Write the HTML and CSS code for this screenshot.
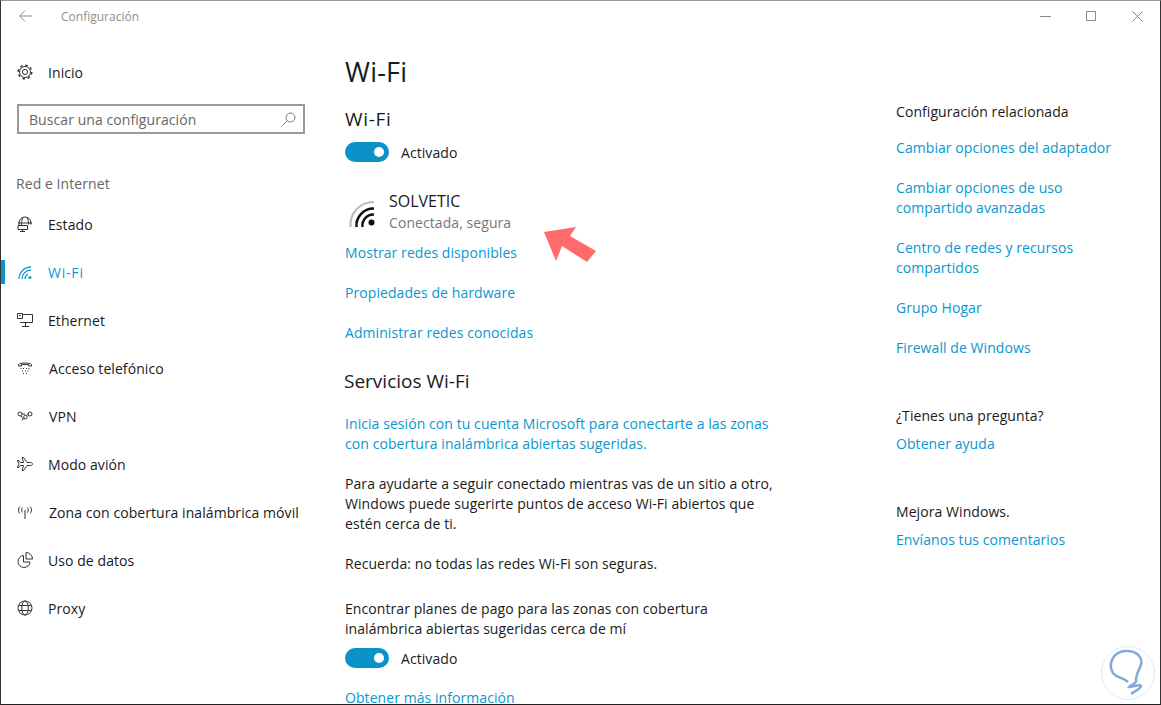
FILE: index.html
```html
<!DOCTYPE html>
<html>
    <head>
        <title>Configuración</title>
        <link rel="stylesheet" href="styles.css">
    </head>
    <body>
        <div class="window">
            <div class="titlebar">
                <svg class="back" width="13" height="12" viewBox="0 0 13 12"><path d="M6 .5.7 6l5.300 5.500M.7 6H13"/></svg>
                <span class="title">Configuración</span>
                <div class="controls">
                    <svg width="11" height="11" viewBox="0 0 11 11"><path d="M0 5.500h11"/></svg>
                    <svg width="11" height="11" viewBox="0 0 11 11"><path d="M.5 .5h9v9h-9z"/></svg>
                    <svg width="11" height="11" viewBox="0 0 11 11"><path d="m.5 .5 10 10M10.500 .5l-10 10"/></svg>
                </div>
            </div>
            <div class="main">
                <nav class="sidebar">
                    <a class="nav-item home">
                        <svg class="icon" viewBox="0 0 16 16"><circle cx="8" cy="8" r="2.600"/><circle cx="8" cy="8" r="6.800" stroke-dasharray="2.600 2.740" stroke-width="1.400"/><circle cx="8" cy="8" r="5.500"/></svg>
                        <span>Inicio</span>
                    </a>
                    <div class="search">
                        <span>Buscar una configuración</span>
                        <svg width="14" height="14" viewBox="0 0 14 14"><circle cx="8.500" cy="5.500" r="4.500"/><path d="M5.300 8.700 .5 13.500"/></svg>
                    </div>
                    <div class="nav-heading">Red e Internet</div>
                    <a class="nav-item">
                        <svg class="icon" viewBox="0 0 16 16"><path d="M2 9.500V7a6 6 0 0 1 12 0v1.500M1 7h14M6 1.500C4.500 4 4.500 7 4.500 9.500M10 1.500c1.500 2.500 1.500 5 1.500 7M1 9.500h9.500v4H1zM5.500 13.500v2M3 15.500h5"/></svg>
                        <span>Estado</span>
                    </a>
                    <a class="nav-item active">
                        <svg class="icon" viewBox="0 0 16 16"><path d="M2 15A12 12 0 0 1 14 3M5 15A9 9 0 0 1 14 6M8 15a6 6 0 0 1 3-5"/><circle cx="13" cy="13.500" r="1.500" class="dot"/></svg>
                        <span>Wi-Fi</span>
                    </a>
                    <a class="nav-item">
                        <svg class="icon" viewBox="0 0 16 16"><path d="M5 2.500h10.500v8H3M.5 1.500h5v5h-5zM2 3.500h2M8.500 10.500v4M5 14.500h7"/></svg>
                        <span>Ethernet</span>
                    </a>
                    <a class="nav-item shift">
                        <svg class="icon" viewBox="0 0 16 16"><path d="M1.500 6V4.500C3 2.500 13 2.500 14.500 4.500V6h-3V4.500h-7V6zM6 8.500h1M9 8.500h1M3.500 8.500h1M11.500 8.500h1M5 11h1M8 11h1M10.500 11h1M6 13.500h1M9 13.500h1"/></svg>
                        <span>Acceso telefónico</span>
                    </a>
                    <a class="nav-item shift">
                        <svg class="icon" viewBox="0 0 16 16"><circle cx="3" cy="6" r="2"/><circle cx="8.500" cy="9" r="1.800"/><circle cx="13" cy="6" r="2"/><path d="m4 8 3 3.500M10 7.500l1.500-2M6 11l-1 1.500M5 6h3"/></svg>
                        <span>VPN</span>
                    </a>
                    <a class="nav-item">
                        <svg class="icon" viewBox="0 0 16 16"><path d="M15.500 8c0-1-1-1.500-2-1.500H10L6.500 1.500H5L6.500 6.500H3.500L2 4.500H.5L2 8 .5 11.500H2L3.500 9.500h3L5 14.500h1.500L10 9.500h3.500c1 0 2-.5 2-1.500z"/></svg>
                        <span>Modo avión</span>
                    </a>
                    <a class="nav-item shift">
                        <svg class="icon" viewBox="0 0 16 16"><path d="M8 6v9M3 2.500c-2 2-2 5 0 7M13 2.500c2 2 2 5 0 7M5.500 3.500c-1 1-1 4 0 5M10.500 3.500c1 1 1 4 0 5"/></svg>
                        <span>Zona con cobertura inalámbrica móvil</span>
                    </a>
                    <a class="nav-item">
                        <svg class="icon" viewBox="0 0 16 16"><path d="M6.500 3.500a6 6 0 1 0 6.500 6.500H6.500zM9 .5a6.500 6.500 0 0 1 6.500 6.500H9z"/></svg>
                        <span>Uso de datos</span>
                    </a>
                    <a class="nav-item">
                        <svg class="icon" viewBox="0 0 16 16"><circle cx="8" cy="8" r="7"/><ellipse cx="8" cy="8" rx="3.300" ry="7"/><path d="M1.500 5.500h13M1.500 10.500h13"/></svg>
                        <span>Proxy</span>
                    </a>
                </nav>
                <div class="content">
                    <h1>Wi-Fi</h1>
                    <h2 class="wifi-title">Wi-Fi</h2>
                    <div class="toggle-row">
                        <span class="toggle"></span>
                        <span>Activado</span>
                    </div>
                    <div class="network">
                        <svg width="30" height="30" viewBox="0 0 30 30">
                            <path class="arc-off" d="M3.500 28A23 23 0 0 1 27 3"/>
                            <path class="arc-on" d="M9.500 28A17 17 0 0 1 27 9.500M15.500 28A11 11 0 0 1 27 15.500"/>
                            <circle class="arc-dot" cx="24.500" cy="23.500" r="3"/>
                        </svg>
                        <div>
                            <div class="network-name">SOLVETIC</div>
                            <div class="network-state">Conectada, segura</div>
                        </div>
                    </div>
                    <a class="link row">Mostrar redes disponibles</a>
                    <a class="link row">Propiedades de hardware</a>
                    <a class="link row">Administrar redes conocidas</a>
                    <h2 class="services">Servicios Wi-Fi</h2>
                    <p class="link first">Inicia sesión con tu cuenta Microsoft para conectarte a las zonas<br>con cobertura inalámbrica abiertas sugeridas.</p>
                    <p>Para ayudarte a seguir conectado mientras vas de un sitio a otro,<br>Windows puede sugerirte puntos de acceso Wi-Fi abiertos que<br>estén cerca de ti.</p>
                    <p>Recuerda: no todas las redes Wi-Fi son seguras.</p>
                    <p class="plans">Encontrar planes de pago para las zonas con cobertura<br>inalámbrica abiertas sugeridas cerca de mí</p>
                    <div class="toggle-row second">
                        <span class="toggle"></span>
                        <span>Activado</span>
                    </div>
                    <a class="link row more">Obtener más información</a>
                </div>
                <aside class="related">
                    <div class="plain">Configuración relacionada</div>
                    <a class="link gap">Cambiar opciones del adaptador</a>
                    <a class="link gap">Cambiar opciones de uso<br>compartido avanzadas</a>
                    <a class="link gap">Centro de redes y recursos<br>compartidos</a>
                    <a class="link gap">Grupo Hogar</a>
                    <a class="link gap">Firewall de Windows</a>
                    <div class="plain block">¿Tienes una pregunta?</div>
                    <a class="link near">Obtener ayuda</a>
                    <div class="plain block">Mejora Windows.</div>
                    <a class="link near">Envíanos tus comentarios</a>
                </aside>
            </div>
            <!-- annotation and watermark sit over the page -->
            <svg class="arrow" width="54" height="38" viewBox="0 0 54 38"><path d="M0 5 32 0 26 9 52 24 43 35 18 19 12 34z"/></svg>
            <svg class="mark" width="56" height="56" viewBox="0 0 56 56">
                <circle class="mark-ring" cx="28" cy="28" r="26.500"/>
                <path class="mark-bulb" d="M28 37C24 33 17 33 13 28 8 20 12 7 25 6 36 5 43 12 41 20 39 25 36 29 36 36 36 39 30 40 29 42 33 42 41 39 41 41 41 44 33 47 31 49"/>
            </svg>
        </div>
    </body>
</html>
```
FILE: styles.css
```css
* { box-sizing: border-box; }

body {
    margin: 0;
    font-family: "Open Sans", "Noto Sans", sans-serif;
    font-size: 14px;
    letter-spacing: .07px;
    color: #1a1a1a;
    background: #fff;
}

.window {
    position: relative;
    height: 705px;
    overflow: hidden;
    border-top: 1px solid #999;
    border-left: 1px solid #333;
    border-right: 1px solid #333;
    border-bottom: 1px solid #222;
}

svg { fill: none; stroke: #333; stroke-width: 1; }

/* title bar */
.titlebar {
    display: flex;
    align-items: center;
    height: 30px;
    padding-left: 18px;
}
.back path { stroke: #8a8a8a; }
.title {
    margin-left: 29px;
    font-size: 12px;
    letter-spacing: 0;
    color: #8f8f8f;
}
.controls {
    display: flex;
    gap: 35px;
    margin-left: auto;
    padding-right: 17px;
}
.controls path { stroke: #8a8a8a; }

.main { display: flex; }

/* left navigation */
.sidebar { width: 344px; flex: none; padding-top: 17px; }

.nav-item {
    position: relative;
    display: flex;
    align-items: center;
    height: 48px;
    padding-left: 16px;
    color: #1a1a1a;
}
.nav-item .icon {
    width: 16px;
    height: 16px;
    margin-right: 15px;
    flex: none;
}
.nav-item.shift .icon { margin-right: 16px; }
.nav-item.active { color: #0a9bd3; }
.nav-item.active span { letter-spacing: .8px; }
.nav-item.active::before {
    content: "";
    position: absolute;
    left: 0;
    top: 12px;
    width: 4px;
    height: 24px;
    background: #0a92c9;
}
.nav-item.active .icon { stroke: #0a9bd3; stroke-width: 1.300; }
.nav-item.active .dot { fill: #0a9bd3; stroke: none; }

.search {
    display: flex;
    align-items: center;
    justify-content: space-between;
    width: 288px;
    height: 30px;
    margin: 8px 0 0 16px;
    padding: 0 7px 0 10px;
    border: 2px solid #999;
    color: #666;
}
.search svg { stroke: #777; }

.nav-heading {
    margin: 40px 0 6px 15px;
    line-height: 20px;
    color: #666;
}

/* middle column */
.content { width: 551px; flex: none; }

h1 {
    margin: 21px 0 0;
    font-size: 27px;
    font-weight: 400;
    letter-spacing: .2px;
    line-height: 40px;
}
h2 {
    margin: 13px 0 0;
    font-size: 19px;
    font-weight: 400;
    letter-spacing: 0;
    line-height: 28px;
}
h2.wifi-title { letter-spacing: .7px; }
h2.services { margin: 24px 0 0 -1px; }

.toggle-row {
    display: flex;
    align-items: center;
    gap: 12px;
    height: 20px;
    margin-top: 9px;
}
.toggle-row.second { margin-top: 9px; }
.toggle {
    display: block;
    position: relative;
    width: 44px;
    height: 20px;
    border-radius: 10px;
    background: #0a92c9;
}
.toggle::after {
    content: "";
    position: absolute;
    top: 5px;
    right: 5px;
    width: 10px;
    height: 10px;
    border-radius: 50%;
    background: #fff;
}

.network {
    display: flex;
    gap: 12px;
    margin: 29px 0 0 2px;
}
.network svg { margin-top: 8px; }
.network-name { line-height: 20px; font-size: 16px; letter-spacing: 0; }
.network-state { line-height: 20px; margin-top: 2px; color: #777; }
.arc-off { stroke: #bbb; stroke-width: 2.200; }
.arc-on { stroke: #111; stroke-width: 2.500; }
.arc-dot { fill: #111; stroke: none; }

.link { color: #0897d0; }
.row { display: block; line-height: 20px; margin-top: 20px; }
.network + .row { margin-top: 10px; }
.row.more { margin-top: 20px; }

p { margin: 20px 0 0; line-height: 20px; }
p.first { margin-top: 19px; }
p.plans { margin-top: 25px; }

/* right column */
.related { padding-top: 71px; }
.related .plain { line-height: 20px; }
.related .gap { display: block; line-height: 20px; margin-top: 20px; }
.related .plain + .gap { margin-top: 16px; }
.related .block { margin-top: 48px; }
.related .near { display: block; line-height: 20px; margin-top: 8px; }

/* overlays */
.arrow {
    position: absolute;
    left: 543px;
    top: 226px;
}
.arrow path { fill: #ff6b6b; stroke: none; }
.mark {
    position: absolute;
    left: 1099px;
    top: 644px;
}
.mark-ring { stroke: #e4ebf5; }
.mark-bulb { stroke: #86a8d8; stroke-width: 2.500; }
```
